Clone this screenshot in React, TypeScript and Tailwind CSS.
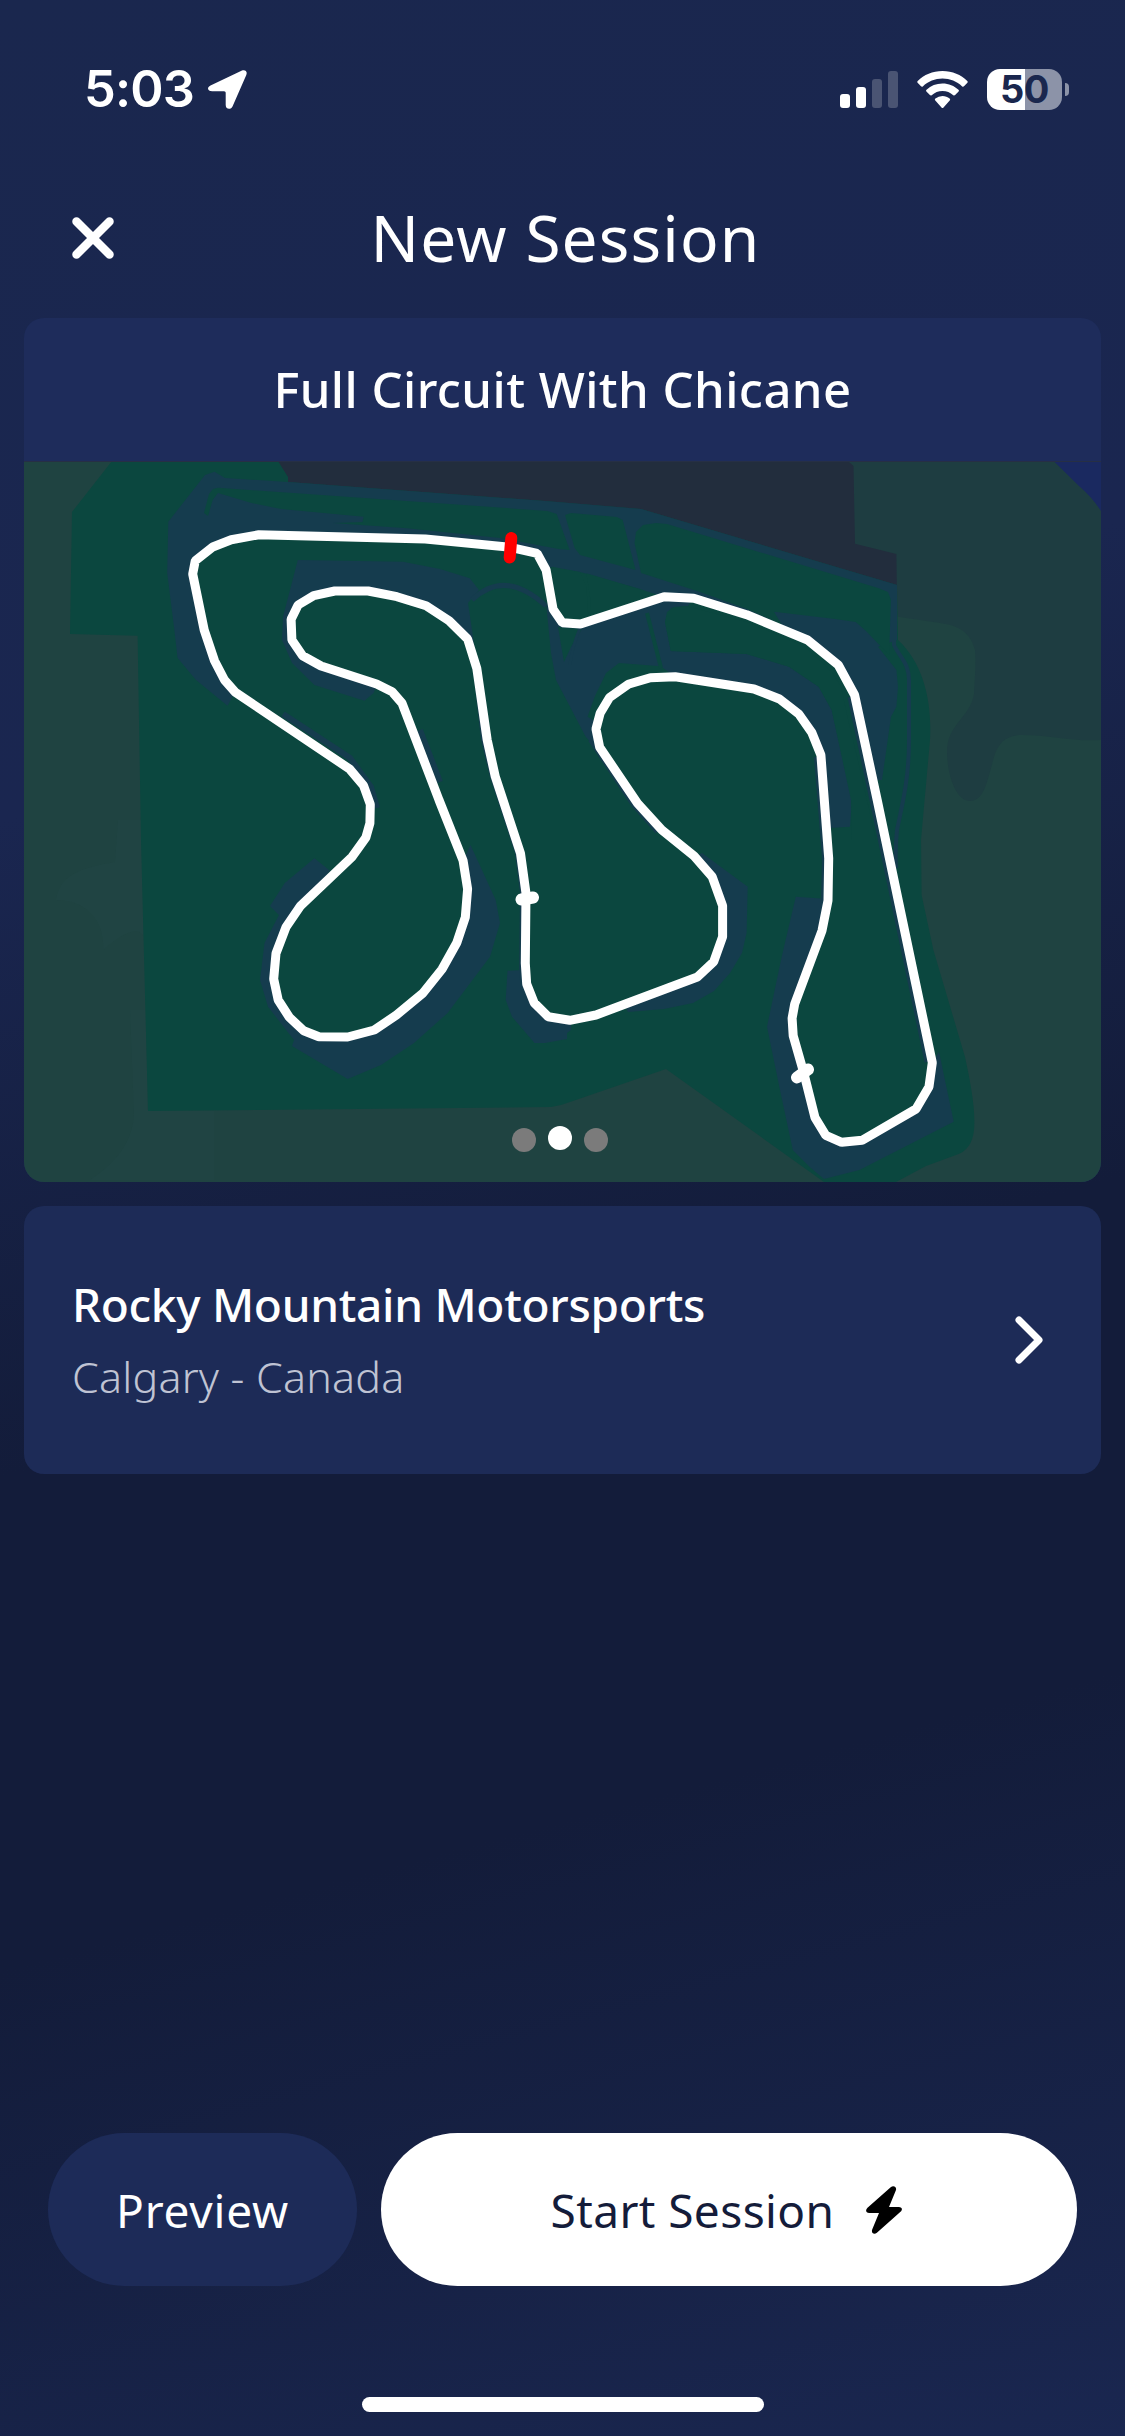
const TRACK =
  "510.5,547.3 425.4,539 258.9,534.7 231.2,539.7 212.7,547 195.3,560.7 192.7,574 204.2,630 214.5,660.7 224.5,680 235.3,692.3 349.6,769 363.6,785.7 370.3,804.3 369.9,823.3 365.8,837.7 352.2,856.7 300.4,906 285.9,927.3 276,953.3 273.7,979 278.2,1000 289.3,1017.3 303.7,1030.7 318.9,1036.7 347.7,1037 374.3,1030 396.5,1015 422.8,993.3 442,969.3 456.8,942.7 465.3,917.3 467.6,889 463.1,860.7 439,800 402.1,703.3 392.1,691.7 376.6,684 321.1,666 302.6,655.7 291.9,640 291.1,619.3 298.1,605 313.7,595.7 334.8,591 368.1,591 396.9,596.7 426.1,605.7 449.1,620.7 467.6,639 476.8,668.3 487.2,740 495.3,776.7 520.5,853.3 526,893.3 525.3,963.3 526.7,984 534.1,1002.7 548.2,1016.7 569.8,1020.3 596,1015 697.4,977 713.7,961.7 722.6,936.7 722.6,905.7 712.2,876.7 694.1,856 661.9,830 637.5,803.3 599.7,747.3 596,729 600.1,713.3 609.4,697.7 628.2,684.3 650.4,677.7 675.2,676.7 754,689 779.5,699 798.8,714 811.7,732.3 820.9,755 828.7,858.3 828,900.7 822,930.7 794.7,1004 792.1,1018.3 793.2,1035.7 803.9,1073.3 815,1117.7 825.8,1135.3 841.7,1142.3 862,1140.3 916,1109 929,1086.7 932.3,1062.7 877.2,800 854.6,695 838.3,665 807.6,640 746.6,614.7 693.7,598.3 664.1,596.7 580.5,624 562.4,622.7 553.1,609.3 546.1,570 537.1,553.3";

const ASPHALT = [
  // outer service road and pit area
  "225,478 214.5,471.7 205,475 168.3,521.7 167.2,573 174,627 177.6,658 196,680 227.5,705.7 235,692 224,680 214,660 204,630 193,574 195,561 213,547 231,540 259,535 425,539 510,547 537,553 546,567 580,572 640,589 664,597 694,598 747,615 808,640 838,665 855,695 872,780 882,780 891,716.7 896.4,706.7 898,686.7 896.4,670 878,646.7 897,640 897,585 641,509 545,501 288,482",
  // centre paddock
  "546,603 551,653 556,680 585.7,736.7 598,750 596,729 600,713 609,698 628,684 650,678 675,677 754,689 779,699 799,714 812,732 821,755 828.7,828 850,826.7 852,800 831.7,710 818.7,686.7 789,666.7 746.6,654 670.8,651 665,621.7 671,608 688,606 693,598 664,597 580,624 562,623 553,609",
  // run-off areas
  "297.8,560 403,561.7 440,569 469.8,578.3 479,590 468,603 475,650 467.6,639 449,621 426,606 397,597 368,591 335,591 314,596 298,605 291,619 292,640 303,656 321,666 377,684 373.6,693 364.4,700.7 314.4,685 292,663 282,640 283,616.7 290,590",
  "314.4,858.3 330,870.7 300,906 286,927 276,953 274,979 278,1000 289,1017 304,1031 319,1037 348,1037 374,1030 396,1015 423,993 442,969 457,943 465,917 468,889 463,861 470.5,845 495.7,900 500,923 490,956.7 447.6,1013 414,1043 381,1065 347.7,1079 292,1046 294,1040 268,1006.7 260,980 264.5,943 279,915 270,906 284.8,883",
  "507.5,970.7 525,970 527,984 534,1003 548,1017 571,1021 571,1030 567,1033 567,1039 545,1043 534.5,1043 512,1016.7 505.7,1000",
  "702,853 747.7,886.7 746.6,933 742,953 730,973 714,991 693,1003 664,1009 628,1012 625,1006 697,977 714,962 723,937 723,906 712,877 695,857",
  "795.8,896.7 828,899 822,931 795,1004 792,1018 793,1036 804,1073 815,1118 826,1135 842,1142 862,1140 916,1109 929,1087 932,1063 939,1051.7 953.7,1121.7 859.4,1170 824,1179 809.5,1166.7 792.8,1150 780,1090 767,1026.7 781.7,956.7",
];

const GRASS = [
  "218,487.7 547.5,511 556.7,514 569.7,550 558.6,549 500,538 406.9,528.3 332.9,523 362.5,522 363.6,516.7 281,509 251.5,503 218,493 212.7,500 208,516 204,513 209,494 213,489",
  "565,515 571,513 617,517 622.7,520 635.6,570 580,555 574.6,548",
  "656,523 643,525 636,532 634.5,543 641,573 700,592 747,609 782,625 774,611.7 835,619 855.7,622 866,631 889,655 891,600 888,592 878,588 667,524",
  "552.4,566.7 580,572 586.4,586.7 588.3,617 580,624 562,622 553,609 546,570",
  "586.4,573.3 639.3,589 645,600 591,620 590,596.7",
  "665,621.7 667,612 674,607 686,606 747,622 804,646 832,672 841,686.7 847,715 859.4,766.7 876,840 852,840 851,800 831.7,710 818.7,686.7 789,666.7 746.6,654 670.8,651",
  "558,627 582,629 571,647 564,662",
  "657.8,666 619,663 606,673 595,696 587.5,716.7 596,722 609,698 628,684 650,678 675,677 666,670 660,666",
];

function TrackMap() {
  return (
    <svg viewBox="24 462 1077 720" className="block h-[720px] w-full" aria-label="Circuit map">
      <rect x="24" y="461" width="1077" height="722" fill="#1f4341" />
      <path d="M141 820H118L115 862C80 868 60 875 56 900C90 900 105 925 103 950C125 930 143 925 144 940ZM148 1111H214V1180H90C120 1160 132 1140 134 1115L130 1010 146 1010Z" fill="#204544" opacity=".8" />
      <path d="M850 461H1101V740C1075 742 1050 735 1022 735C1006 735 998 743 994 757C987 782 984 801 970 801C955 801 947 772 947 752C947 724 970 718 974 694C975 675 976 665 975 650C970 630 955 625 940 623L880 614 850 560Z" fill="#1e3d41" />
      <path d="M1053.6 461H1101V511Q1092 497 1079 486Z" fill="#1a2960" />
      <path d="M275 461H848L853.5 466 855 543.7 896.4 554 897 600H275Z" fill="#222d3d" />
      <path d="M112 461 72 512 70 634 137.6 635.7 141 840 148 1111 551 1107Q560 1106 570 1102L666 1069 824 1182H896L926 1166 956 1155Q972 1150 974 1130C976 1110 970 1080 965 1057L933.4 950 921.6 895 921 840 930 740C932 705 925 665 898 640L897 585 641 509 545 501 288 482V477L278 461Z" fill="#0b473f" />
      <g fill="#153c4e">
        {ASPHALT.map((points) => (
          <polygon key={points} points={points} />
        ))}
      </g>
      <g fill="#0b473f">
        {GRASS.map((points) => (
          <polygon key={points} points={points} />
        ))}
      </g>
      <g fill="none" stroke="#153c4e">
        <path d="M472 600Q505 568 546 606" strokeWidth="5" />
        <path d="M894 590V645C900 658 909 663 909 680V740C909 780 902 805 897 830Q895 850 896 868" strokeWidth="4" />
        <path d="M580 628Q571 650 570 665" strokeWidth="3" />
        <path d="M283 714 350 758 371 787 377 808M420 730 440 782" strokeWidth="6" />
        <polyline points="474,660 483,740 492,777 517,853 522,893 521,980" strokeWidth="4" />
        <polyline points="657,832 633,805 590,740" strokeWidth="4" />
        <polyline points="816,757 824,858 823,900" strokeWidth="4" />
        <polyline points="850,697 872,800 927,1062" strokeWidth="5" />
      </g>
      <path d="M647 613 661 668" stroke="#0b473f" strokeWidth="4" />
      <polygon points={TRACK} fill="none" stroke="#fff" strokeWidth="9" strokeLinejoin="bevel" />
      <g stroke="#fff" strokeWidth="12" strokeLinecap="round">
        <path d="M521.5 899.5 533 897.5M797 1077.5 808 1069.5" />
      </g>
      <path d="M511.3 538 509.7 557.5" stroke="#f00" strokeWidth="12" strokeLinecap="round" />
    </svg>
  );
}

function StatusBar() {
  return (
    <div className="flex h-[176px] items-start justify-between pr-[56px] pl-[84px] pt-[59px] text-white">
      <div className="flex h-[60px] items-center">
        <span className="w-[124px] whitespace-nowrap font-[Inter] text-[50.5px] leading-[60px] font-semibold tracking-[-0.8px]">5:03</span>
        <svg className="h-[39px] w-[39px]" viewBox="0 0 39 39" fill="#fff">
          <path d="M2.500 15.500 34 .6c3.200-1.400 5.700 1 4.300 4.300L24.500 36.500c-1.500 3.500-6.800 3.200-6.800-1.500V23c0-1-.5-1.700-1.700-1.700H4.200c-4.700 0-5.700-4-1.700-5.800Z" />
        </svg>
      </div>
      <div className="flex h-[60px] items-center">
        <div className="mr-[19px] flex h-[37px] items-end gap-[6px]">
          <div className="h-[14px] w-[10px] rounded-[3px] bg-white" />
          <div className="h-[21px] w-[10px] rounded-[3px] bg-white" />
          <div className="h-[29px] w-[10px] rounded-[3px] bg-[#4a5473]" />
          <div className="h-[37px] w-[10px] rounded-[3px] bg-[#4a5473]" />
        </div>
        <svg className="mr-[19px] h-[37px] w-[51px]" viewBox="0 0 51 37" fill="#fff">
          <path d="M25.500 0C35.500 0 44 3.700 50.300 10c.6.600.6 1.200.1 1.800l-3.400 3.500c-.6.600-1.200.6-1.800.1C39.800 10.400 33 7.500 25.500 7.500S11.200 10.400 5.800 15.400c-.6.500-1.200.5-1.800-.1L.6 11.800C.1 11.200.1 10.600.7 10 7 3.700 15.500 0 25.500 0Z" />
          <path d="M25.500 12.500c6.200 0 11.800 2.400 16 6.300.6.600.6 1.200.1 1.800l-3.500 3.500c-.6.600-1.200.6-1.800.1a15.800 15.800 0 0 0-21.600 0c-.6.500-1.200.5-1.800-.1l-3.500-3.500c-.5-.6-.5-1.200.1-1.800a23.200 23.200 0 0 1 16-6.300Z" />
          <path d="M25.500 25c2.700 0 5.200 1 7.100 2.600.7.600.7 1.200.1 1.800l-6.200 7c-.6.700-1.400.7-2 0l-6.200-7c-.6-.6-.6-1.200.1-1.800A11 11 0 0 1 25.500 25Z" />
        </svg>
        <div className="flex h-[41px] w-[75px] items-center justify-center rounded-[13px] bg-linear-to-r from-white from-[51%] to-[#8c93a8] to-[51%] font-[Inter] text-[38px] leading-[41px] font-bold tracking-[-0.5px] text-[#1a274e]">50</div>
        <div className="ml-[3px] h-[13px] w-[4px] rounded-r-full bg-[#8c93a8]" />
      </div>
    </div>
  );
}

export default function App() {
  return (
    <div className="flex h-[2436px] w-[1125px] flex-col bg-[linear-gradient(165deg,#1a274e_0%,#1a2650_30%,#131c3a_54%,#131c3a_72%,#1a2751_101%)] font-['Noto_Sans',sans-serif] text-white">
      <StatusBar />
      <header className="flex h-[142px] items-center px-[72px] pb-[18px]">
        <button className="h-[42px] w-[42px]" aria-label="Close">
          <svg viewBox="0 0 42 42" className="h-[42px] w-[42px]" fill="none" stroke="#fff" strokeWidth="8.500" strokeLinecap="round">
            <path d="M4.500 4.500 37.500 37.500M37.500 4.500 4.500 37.500" />
          </svg>
        </button>
        <h1 className="flex-1 pr-[36px] text-center text-[64px] leading-[80px] tracking-[1.1px]">New Session</h1>
      </header>
      <main className="flex flex-1 flex-col gap-[24px] px-[24px]">
        <section className="relative h-[864px] overflow-hidden rounded-[20px] bg-[#1e2c5b]">
          <h2 className="h-[144px] border-b border-[#262f45] text-center text-[49px] leading-[143px] font-medium tracking-[0.45px]">Full Circuit With Chicane</h2>
          <TrackMap />
          <div className="absolute inset-x-0 bottom-[30px] flex justify-center gap-[12px] pr-[5px]">
            <span className="h-[24px] w-[24px] rounded-full bg-[#7b7b7b]" />
            <span className="-mt-[2px] h-[24px] w-[24px] rounded-full bg-white" />
            <span className="h-[24px] w-[24px] rounded-full bg-[#7b7b7b]" />
          </div>
        </section>
        <section className="flex h-[268px] items-center justify-between rounded-[20px] bg-[#1d2b57] pr-[56px] pl-[48px]">
          <div className="flex flex-col">
            <span className="text-[46px] leading-[72px] font-medium tracking-[-0.3px]">Rocky Mountain Motorsports</span>
            <span className="pt-px text-[43px] leading-[72px] font-light tracking-[0.2px] text-[#bfc3d3]">Calgary - Canada</span>
          </div>
          <svg viewBox="0 0 31 50" className="h-[50px] w-[31px]" fill="none" stroke="#fff" strokeWidth="7" strokeLinecap="round" strokeLinejoin="round">
            <path d="M5 5 25 25 5 45" />
          </svg>
        </section>
      </main>
      <footer className="flex h-[303px] flex-col items-center">
        <div className="flex h-[153px] w-full gap-[24px] px-[48px]">
          <button className="w-[309px] rounded-full bg-[#1d2b58] pt-[2px] text-[46px] tracking-[0.8px]">Preview</button>
          <button className="flex flex-1 items-center justify-center rounded-full bg-white pr-[5px] text-[46px] tracking-[0.4px] text-[#141c3a]">
            <span className="pt-[2px]">Start Session</span>
            <svg viewBox="0 0 36 48" className="ml-[32px] h-[48px] w-[36px]" fill="#000">
              <path d="M24.700 1.200 1.500 21.700C-1 24 0 27 3.200 27H13L6.200 43.400c-1.300 3.500 1.800 5.900 4.700 3.300L34.500 25.800c2.500-2.300 1.500-4.800-1.700-4.800H23L29.800 4.600C31.200 1.200 27.700-1.400 24.700 1.200Z" />
            </svg>
          </button>
        </div>
        <div className="mt-[111px] h-[15px] w-[402px] rounded-full bg-white" />
      </footer>
    </div>
  );
}
